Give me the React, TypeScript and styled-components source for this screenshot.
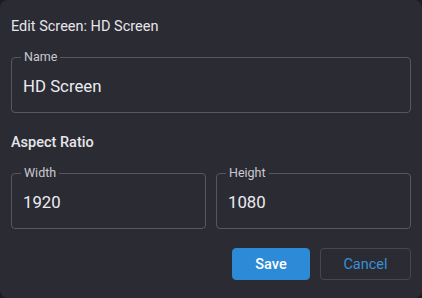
import React from "react";
import styled, { createGlobalStyle } from "styled-components";

const Global = createGlobalStyle`
  html, body { margin: 0; padding: 0; background: #1d1d23; }
  body { font-family: Roboto, "Liberation Sans", sans-serif; }
  * { box-sizing: border-box; }
`;

const Dialog = styled.div`
  width: 422px;
  height: 298px;
  background: #2b2b34;
  border-radius: 8px;
  padding: 17px 11px 0 11px;
  display: flex;
  flex-direction: column;
  color: #e4e4e8;
`;

const Title = styled.h2`
  margin: 0;
  font-size: 14.5px;
  font-weight: 400;
  line-height: 20px;
  color: #e6e6ea;
`;

const Section = styled.h3`
  margin: 20px 0 0 0;
  font-size: 14.5px;
  font-weight: 500;
  line-height: 20px;
  color: #e6e6ea;
`;

const Row = styled.div<{ $mt: number }>`
  display: grid;
  grid-template-columns: 1fr 1fr;
  gap: 10px;
  margin-top: ${(p) => p.$mt}px;
`;

const Field = styled.fieldset<{ $mt?: number }>`
  margin: ${(p) => p.$mt ?? 0}px 0 0 0;
  padding: 0 12px;
  height: 63px;
  border: 1px solid #575762;
  border-radius: 4px;
  min-width: 0;
`;

const Legend = styled.legend`
  margin-left: -3px;
  padding: 0 3px;
  font-size: 12.5px;
  line-height: 14px;
  color: #c9c9cf;
`;

const Input = styled.input`
  display: block;
  width: 100%;
  margin: 7px 0 0 -1px;
  padding: 0;
  height: 30px;
  border: none;
  background: transparent;
  outline: none;
  color: #ececf0;
  font-family: Roboto, "Liberation Sans", sans-serif;
  font-size: 16.8px;
`;

const Actions = styled.div`
  display: flex;
  justify-content: flex-end;
  gap: 10px;
  margin-top: 19px;
`;

const Button = styled.button<{ $primary?: boolean }>`
  height: 32px;
  width: ${(p) => (p.$primary ? 78 : 91)}px;
  border-radius: 4px;
  font-family: Roboto, "Liberation Sans", sans-serif;
  font-size: 14.5px;
  font-weight: ${(p) => (p.$primary ? 500 : 400)};
  cursor: pointer;
  background: ${(p) => (p.$primary ? "#2c8ad6" : "transparent")};
  color: ${(p) => (p.$primary ? "#ffffff" : "#3a8fd6")};
  border: 1px solid ${(p) => (p.$primary ? "#2c8ad6" : "#474752")};
`;

export default function App() {
  return (
    <>
      <Global />
      <Dialog>
        <Title>Edit Screen: HD Screen</Title>
        <Field $mt={13}>
          <Legend>Name</Legend>
          <Input defaultValue="HD Screen" />
        </Field>
        <Section>Aspect Ratio</Section>
        <Row $mt={13}>
          <Field>
            <Legend>Width</Legend>
            <Input defaultValue="1920" />
          </Field>
          <Field>
            <Legend>Height</Legend>
            <Input defaultValue="1080" />
          </Field>
        </Row>
        <Actions>
          <Button $primary>Save</Button>
          <Button>Cancel</Button>
        </Actions>
      </Dialog>
    </>
  );
}
